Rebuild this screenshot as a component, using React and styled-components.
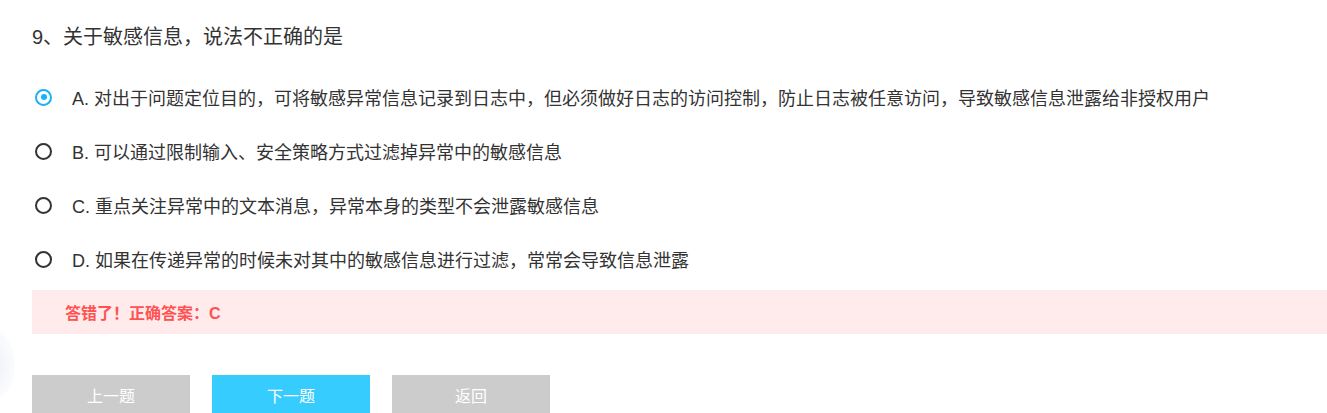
import React from "react";
import styled, { createGlobalStyle } from "styled-components";

const Global = createGlobalStyle`
  html, body { margin: 0; padding: 0; background: #fff; }
  body { font-family: "Liberation Sans", "Noto Sans CJK SC", sans-serif; color: #333; overflow: hidden; }
`;

const Page = styled.div`
  position: relative;
  width: 1327px;
  height: 413px;
  padding: 22px 0 0 32px;
  box-sizing: border-box;
  overflow: hidden;
`;

const Title = styled.div`
  font-size: 20px;
  line-height: 30px;
  height: 30px;
  color: #333;
`;

const Options = styled.ul`
  list-style: none;
  margin: 18px 0 0;
  padding: 0;
`;

const Option = styled.li`
  display: flex;
  align-items: center;
  height: 54px;
  font-size: 18px;
  color: #333;
  cursor: pointer;
`;

const Radio = styled.span`
  box-sizing: border-box;
  width: 17px;
  height: 17px;
  margin-left: 3px;
  margin-right: 20px;
  border-radius: 50%;
  border: 2.5px solid ${(p) => (p.$checked ? "#1ab2f2" : "#333")};
  display: flex;
  align-items: center;
  justify-content: center;
  flex-shrink: 0;
  &::after {
    content: "";
    width: 6px;
    height: 6px;
    border-radius: 50%;
    background: #1ab2f2;
    display: ${(p) => (p.$checked ? "block" : "none")};
  }
`;

const Result = styled.div`
  margin-top: 4px;
  height: 44px;
  background: #ffebeb;
  display: flex;
  align-items: center;
  padding-left: 33px;
  font-size: 16px;
  font-weight: bold;
  color: #ff5252;
`;

const Buttons = styled.div`
  display: flex;
  gap: 22px;
  margin-top: 41px;
`;

const Button = styled.button`
  width: 158px;
  height: 40px;
  border: none;
  background: ${(p) => (p.$primary ? "#36ccfe" : "#cccccc")};
  color: #fff;
  font-family: "Liberation Sans", "Noto Sans CJK SC", sans-serif;
  font-size: 16px;
  padding: 0;
  cursor: pointer;
`;

const Glow = styled.div`
  position: absolute;
  left: -30px;
  top: 330px;
  width: 45px;
  height: 70px;
  border-radius: 50%;
  background: radial-gradient(ellipse at center, rgba(220, 225, 240, 0.55) 0%, rgba(230, 233, 245, 0.25) 55%, rgba(255, 255, 255, 0) 100%);
  pointer-events: none;
`;

const options = [
  { key: "A", text: "对出于问题定位目的，可将敏感异常信息记录到日志中，但必须做好日志的访问控制，防止日志被任意访问，导致敏感信息泄露给非授权用户", checked: true },
  { key: "B", text: "可以通过限制输入、安全策略方式过滤掉异常中的敏感信息" },
  { key: "C", text: "重点关注异常中的文本消息，异常本身的类型不会泄露敏感信息" },
  { key: "D", text: "如果在传递异常的时候未对其中的敏感信息进行过滤，常常会导致信息泄露" },
];

export default function App() {
  return (
    <>
      <Global />
      <Page>
        <Title>9、关于敏感信息，说法不正确的是</Title>
        <Options>
          {options.map((o) => (
            <Option key={o.key}>
              <Radio $checked={o.checked} />
              <span>{o.key}. {o.text}</span>
            </Option>
          ))}
        </Options>
        <Result>答错了！正确答案：C</Result>
        <Buttons>
          <Button>上一题</Button>
          <Button $primary>下一题</Button>
          <Button>返回</Button>
        </Buttons>
        <Glow />
      </Page>
    </>
  );
}
